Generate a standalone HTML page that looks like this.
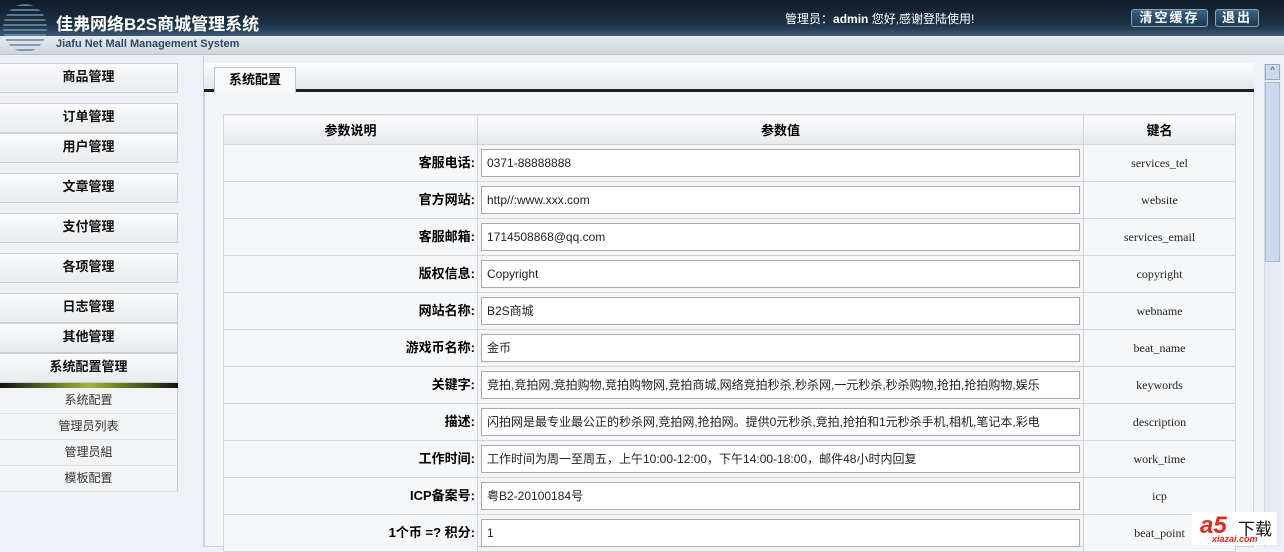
<!DOCTYPE html><html><head><meta charset="utf-8"><style>
*{margin:0;padding:0;box-sizing:border-box}
body{width:1284px;height:547px;overflow:hidden;background:#eef1f5;font-family:"Liberation Sans","Noto Sans CJK SC",sans-serif;position:relative}
.hd{position:absolute;left:0;top:0;width:1284px;height:36px;background:linear-gradient(#0f1a26,#1e3347 70%,#3a5a78)}
.strip{position:absolute;left:0;top:36px;width:1284px;height:19px;background:linear-gradient(#e6eaee,#cfd6dd);border-bottom:1px solid #b8c0c8}
.title{position:absolute;left:56px;top:10px;color:#fff;font-size:17px;font-weight:bold}
.sub{position:absolute;left:56px;top:38px;color:#2a4a6a;font-size:11px;font-weight:bold}
.logo{position:absolute;left:3px;top:4px;width:44px;height:48px;border-radius:50%;background:repeating-linear-gradient(#6d8aa8 0 2px,transparent 2px 5px);opacity:.8}
.user{position:absolute;left:785px;top:10px;color:#fff;font-size:12px}
.btn{position:absolute;top:9px;height:18px;border:1px solid #8aa;border-radius:3px;background:linear-gradient(#3b6186,#1c3a58);color:#fff;font-size:13px;font-weight:bold;text-align:center;line-height:16px;letter-spacing:2px}
.nav{position:absolute;left:0;width:178px;height:30px;background:linear-gradient(#fafbfc,#e8ecef);border:1px solid #c9cfd5;border-left:none;text-align:center;font-size:13px;font-weight:bold;line-height:26px;color:#111}
.subm{position:absolute;left:0;width:178px;height:26px;text-align:center;font-size:12px;color:#333;line-height:24px;border-bottom:1px solid #dde2e6;border-right:1px solid #ccc;background:#f1f3f5}
.vline{position:absolute;left:203px;top:56px;width:1px;height:491px;background:#c8ced4}
.panel{position:absolute;left:204px;top:63px;width:1050px;height:484px;background:#f3f5f8;border:1px solid #cdd3d9}
.tabbar{position:absolute;left:204px;top:63px;width:1050px;height:29px;background:linear-gradient(#fbfcfd,#e3e8ec);border-bottom:3px solid #14202c}
.tab{position:absolute;left:214px;top:67px;width:82px;height:26px;background:#f6f8fa;border:1px solid #bcc4cc;border-bottom:none;font-size:13px;font-weight:bold;text-align:center;line-height:24px}
table{position:absolute;left:223px;top:114px;border-collapse:collapse;width:1013px}
td,th{border:1px solid #d0d6dc;height:37px;font-size:12px}
th{height:30px;background:linear-gradient(#fdfdfe,#e4e8ec);font-weight:bold;font-size:13px}
td.l{text-align:right;font-weight:bold;font-size:13px;padding-right:2px;width:254px;background:#f5f7f9;padding-bottom:3px}
td.v{width:606px;padding:0 3px}
td.k{text-align:center;font-family:"Liberation Serif",serif;color:#222;background:#f5f7f9}
.in{height:28px;border:1px solid #a9a9a9;background:#fff;font-size:12px;line-height:26px;padding-left:5px;white-space:nowrap;overflow:hidden;color:#222}
.sb{position:absolute;left:1264px;top:64px;width:17px;height:483px;background:#e4ebf5;border-left:1px solid #cfd8e4}
.sbt{position:absolute;left:1265px;top:64px;width:15px;height:16px;background:#cbdaf0;border:1px solid #9ab;font-size:9px;text-align:center;color:#345}
.thumb{position:absolute;left:1265px;top:82px;width:15px;height:180px;background:#c9d9f0;border:1px solid #a6bcd8}
.a5{position:absolute;left:1192px;top:512px;width:85px;height:33px;background:#fff}
</style></head><body>
<div class="hd"></div><div class="strip"></div>
<div class="logo"></div>
<div class="title">佳弗网络B2S商城管理系统</div>
<div class="sub">Jiafu Net Mall Management System</div>
<div class="user">管理员：<b>admin</b> 您好,感谢登陆使用!</div>
<div class="btn" style="left:1131px;width:77px">清空缓存</div>
<div class="btn" style="left:1215px;width:44px">退出</div>

<div class="nav" style="top:63px">商品管理</div>
<div class="nav" style="top:103px">订单管理</div>
<div class="nav" style="top:133px">用户管理</div>
<div class="nav" style="top:173px">文章管理</div>
<div class="nav" style="top:213px">支付管理</div>
<div class="nav" style="top:253px">各项管理</div>
<div class="nav" style="top:293px">日志管理</div>
<div class="nav" style="top:323px">其他管理</div>
<div class="nav" style="top:353px">系统配置管理</div>
<div style="position:absolute;left:0;top:383px;width:178px;height:5px;background:linear-gradient(90deg,#111,#9cb833 50%,#111)"></div>
<div class="subm" style="top:388px">系统配置</div>
<div class="subm" style="top:414px">管理员列表</div>
<div class="subm" style="top:440px">管理员組</div>
<div class="subm" style="top:466px">模板配置</div>

<div class="vline"></div>
<div class="panel"></div>
<div class="tabbar"></div>
<div class="tab">系统配置</div>
<table>
<tr><th>参数说明</th><th>参数值</th><th>键名</th></tr>
<tr><td class="l">客服电话:</td><td class="v"><div class="in">0371-88888888</div></td><td class="k">services_tel</td></tr>
<tr><td class="l">官方网站:</td><td class="v"><div class="in">http//:www.xxx.com</div></td><td class="k">website</td></tr>
<tr><td class="l">客服邮箱:</td><td class="v"><div class="in">1714508868@qq.com</div></td><td class="k">services_email</td></tr>
<tr><td class="l">版权信息:</td><td class="v"><div class="in">Copyright</div></td><td class="k">copyright</td></tr>
<tr><td class="l">网站名称:</td><td class="v"><div class="in">B2S商城</div></td><td class="k">webname</td></tr>
<tr><td class="l">游戏币名称:</td><td class="v"><div class="in">金币</div></td><td class="k">beat_name</td></tr>
<tr><td class="l">关键字:</td><td class="v"><div class="in">竞拍,竞拍网,竞拍购物,竞拍购物网,竞拍商城,网络竞拍秒杀,秒杀网,一元秒杀,秒杀购物,抢拍,抢拍购物,娱乐</div></td><td class="k">keywords</td></tr>
<tr><td class="l">描述:</td><td class="v"><div class="in">闪拍网是最专业最公正的秒杀网,竞拍网,抢拍网。提供0元秒杀,竞拍,抢拍和1元秒杀手机,相机,笔记本,彩电</div></td><td class="k">description</td></tr>
<tr><td class="l">工作时间:</td><td class="v"><div class="in">工作时间为周一至周五，上午10:00-12:00，下午14:00-18:00，邮件48小时内回复</div></td><td class="k">work_time</td></tr>
<tr><td class="l">ICP备案号:</td><td class="v"><div class="in">粤B2-20100184号</div></td><td class="k">icp</td></tr>
<tr><td class="l">1个币 =? 积分:</td><td class="v"><div class="in">1</div></td><td class="k">beat_point</td></tr>
</table>
<div class="sb"></div><div class="sbt">^</div><div class="thumb"></div>
<div class="a5"><span style="position:absolute;left:8px;top:0;color:#e8281c;font-size:24px;font-weight:bold;font-style:italic">a5</span><span style="position:absolute;left:46px;top:3px;font-size:17px;color:#111">下载</span><span style="position:absolute;left:20px;top:22px;font-size:9px;color:#e8281c;font-weight:bold;font-style:italic">xiazai.com</span></div>
</body></html>
